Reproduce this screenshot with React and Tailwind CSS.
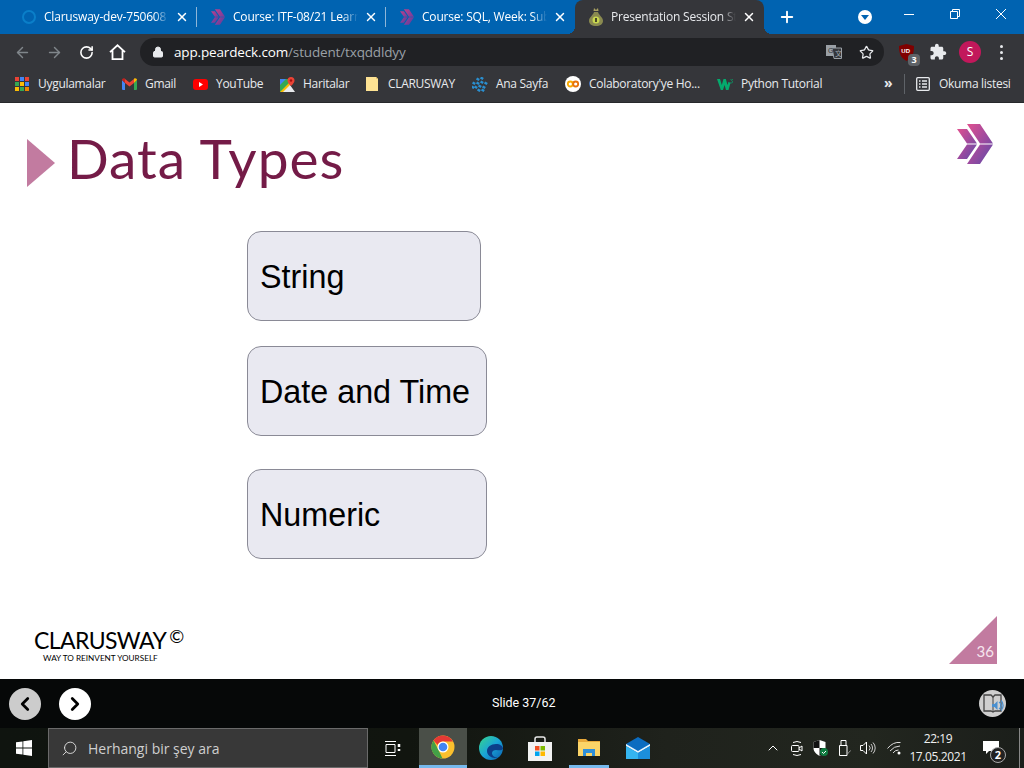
import { ArrowLeft, ArrowRight, RotateCw, Lock, Star, X, Plus, ChevronLeft, ChevronRight, ChevronUp, Search } from 'lucide-react';

const ui = "font-['Open_Sans','Noto_Sans',sans-serif]";

const ClaruswayMark = ({ width = 14, height = 16, id = 'cm', from = '#c0408a', mid = '#8a3f98', to = '#55409c' }) => (
  <svg width={width} height={height} viewBox="0 0 36 40">
    <defs>
      <linearGradient id={id} x1="0" y1="0" x2="1" y2="1">
        <stop offset="0" stopColor={from} />
        <stop offset="0.5" stopColor={mid} />
        <stop offset="1" stopColor={to} />
      </linearGradient>
    </defs>
    <path d="M0 5h10l10 14.500H10z M10 20.500h10L10 35H0z" fill={`url(#${id})`} />
    <path d="M10 0h13l13 19.500H23z M23 20.500h13L23 40H10z" fill={`url(#${id})`} />
  </svg>
);

const Tab = ({ icon, title, active, sep }) => (
  <div className={`relative flex items-center w-[189px] h-[34px] shrink-0 pl-[13px] pr-[8px] ${active ? 'bg-[#35363a] rounded-t-lg text-[#e8eaed]' : 'text-white'}`}>
    <div className="w-4 h-4 flex items-center justify-center shrink-0">{icon}</div>
    <span className="ml-[7px] w-[125px] overflow-hidden whitespace-nowrap text-xs tracking-[-0.2px] [mask-image:linear-gradient(90deg,#000_88%,transparent)]">{title}</span>
    <X size={14} strokeWidth={2.500} className="ml-auto text-white" />
    {sep && <div className="absolute right-0 top-[7px] h-5 w-px bg-[#8fb6d8]" />}
    {active && <div className="absolute -left-2 bottom-0 w-2 h-2 bg-[radial-gradient(circle_at_0_0,#0063b1_8px,#35363a_8px)]" />}
    {active && <div className="absolute -right-2 bottom-0 w-2 h-2 bg-[radial-gradient(circle_at_100%_0,#0063b1_8px,#35363a_8px)]" />}
  </div>
);

const Bookmark = ({ icon, label, width }) => (
  <div className={`flex items-center shrink-0 ${width}`}>
    <div className="w-4 h-4 flex items-center justify-center shrink-0">{icon}</div>
    <span className="ml-2 text-xs tracking-[-0.3px] text-[#e8eaed] whitespace-nowrap">{label}</span>
  </div>
);

const AppsIcon = () => (
  <svg width="14" height="14" viewBox="0 0 14 14">
    {['#ea4335', '#4285f4', '#ea4335', '#34a853', '#fbbc05', '#4285f4', '#fbbc05', '#34a853', '#ea8600'].map((c, i) => (
      <rect key={i} x={(i % 3) * 5} y={Math.floor(i / 3) * 5} width="4" height="4" fill={c} />
    ))}
  </svg>
);

const GmailIcon = () => (
  <svg width="15" height="12" viewBox="0 0 15 12">
    <path d="M0 2v9a1 1 0 0 0 1 1h2V5z" fill="#4285f4" />
    <path d="M15 2v9a1 1 0 0 1-1 1h-2V5z" fill="#34a853" />
    <path d="M3 5V1L7.500 4.500 12 1v4L7.500 8.500z" fill="#ea4335" />
    <path d="M0 2c0-1.500 1.800-2.300 3-1.300V5z" fill="#c5221f" />
    <path d="M15 2c0-1.500-1.800-2.300-3-1.300V5z" fill="#fbbc05" />
  </svg>
);

const YoutubeIcon = () => (
  <svg width="15" height="11" viewBox="0 0 15 11">
    <rect width="15" height="11" rx="3" fill="#f00" />
    <path d="M6 3l4 2.500L6 8z" fill="#fff" />
  </svg>
);

const MapsIcon = () => (
  <svg width="15" height="15" viewBox="0 0 15 15">
    <path d="M0 2h10v13H0z" fill="#34a853" />
    <path d="M0 15L10 5v10z" fill="#fbbc05" />
    <path d="M3 15l7-7 5 7z" fill="#e8eaed" />
    <path d="M0 2h6L0 8z" fill="#4285f4" />
    <path d="M11 0a3.500 3.500 0 0 0-3.500 3.500C7.500 6 11 9 11 9s3.500-3 3.500-5.500A3.500 3.500 0 0 0 11 0z" fill="#ea4335" />
    <circle cx="11" cy="3.500" r="1.200" fill="#a50e0e" />
  </svg>
);

const NoteIcon = () => (
  <svg width="12" height="14" viewBox="0 0 12 14">
    <path d="M0 0h10l2 2v12H0z" fill="#fde293" />
    <path d="M10 0l2 2h-2z" fill="#e8c66a" />
  </svg>
);

const AnaIcon = () => (
  <svg width="16" height="15" viewBox="0 0 16 15" fill="#2a8fd0">
    {[[2, 6], [6, 2], [10, 1], [6, 6], [10, 5], [14, 6], [4, 10], [8, 9], [12, 10], [7, 13], [11, 13], [1, 10]].map(([x, y], i) => (
      <rect key={i} x={x - 1.500} y={y - 1} width="3" height="2.500" transform={`rotate(30 ${x} ${y})`} />
    ))}
  </svg>
);

const ColabIcon = () => (
  <svg width="16" height="16" viewBox="0 0 16 16">
    <circle cx="8" cy="8" r="8" fill="#fff" />
    <circle cx="5.300" cy="8" r="2.500" fill="none" stroke="#f9ab00" strokeWidth="1.800" />
    <circle cx="10.700" cy="8" r="2.500" fill="none" stroke="#e8710a" strokeWidth="1.800" />
  </svg>
);

const W3Icon = () => (
  <svg width="16" height="11" viewBox="0 0 16 11">
    <path d="M0 0h3l1.800 6L6.500 0h2.300l1.700 6 1-3.200L13.500 4l-2 7H9L7.600 6 6 11H3.800z" fill="#04aa6d" />
    <path d="M13 0h2.500v.6l-1 1c.8.200 1.200.6 1.200 1.200 0 .7-.6 1.200-1.500 1.200-.4 0-.8-.1-1.100-.2" fill="none" stroke="#04aa6d" strokeWidth=".7" />
  </svg>
);

const ReadingIcon = () => (
  <svg width="14" height="14" viewBox="0 0 14 14" fill="none" stroke="#e8eaed" strokeWidth="1.300">
    <rect x=".7" y=".7" width="12.600" height="12.600" rx="1" />
    <path d="M3 4h1.500M6 4h5M3 7h1.500M6 7h5M3 10h1.500M6 10h5" />
  </svg>
);

const HomeIcon = () => (
  <svg width="17" height="16" viewBox="0 0 17 16" fill="none" stroke="#fff" strokeWidth="1.800">
    <path d="M1 8.200L8.500 1.300 16 8.200M3.500 6.500v8.600h10V6.500" />
  </svg>
);

const PuzzleIcon = () => (
  <svg width="18" height="18" viewBox="0 0 24 24" fill="#e8eaed">
    <path d="M20.500 11H19V7c0-1.100-.9-2-2-2h-4V3.500C13 2.120 11.880 1 10.500 1S8 2.120 8 3.500V5H4c-1.100 0-1.990.9-1.990 2v3.800H3.500c1.490 0 2.700 1.210 2.700 2.700s-1.210 2.700-2.700 2.700H2V20c0 1.100.9 2 2 2h3.800v-1.500c0-1.490 1.210-2.700 2.700-2.700 1.490 0 2.700 1.210 2.700 2.700V22H17c1.100 0 2-.9 2-2v-4h1.500c1.380 0 2.500-1.120 2.500-2.500S21.880 11 20.500 11z" />
  </svg>
);

const TranslateIcon = () => (
  <svg width="16" height="14" viewBox="0 0 16 14">
    <rect x="0" y="0" width="10" height="11" fill="#9aa0a6" />
    <path d="M6 3h9.500v10.500H8z" fill="#35363a" stroke="#9aa0a6" />
    <text x="2" y="8" fontSize="7" fontFamily="'Liberation Sans',sans-serif" fill="#35363a">G</text>
    <text x="9" y="11" fontSize="7" fontFamily="'Noto Sans CJK JP',sans-serif" fill="#9aa0a6">文</text>
  </svg>
);

const UblockIcon = () => (
  <svg width="15" height="17" viewBox="0 0 15 17">
    <path d="M7.500 0L15 2c0 8-2 12-7.500 15C2 14 0 10 0 2z" fill="#800000" />
    <text x="2.300" y="9" fontSize="6" fontWeight="700" fontFamily="'Liberation Sans',sans-serif" fill="#fff">UD</text>
  </svg>
);

const PearIcon = () => (
  <svg width="14" height="18" viewBox="0 0 14 18">
    <path d="M5 0l2 2 2-2 .5 3h-5z" fill="#a8a060" />
    <path d="M5 4h4c.5 3 5 5 5 9 0 3-3 5-7 5s-7-2-7-5c0-4 4.500-6 5-9z" fill="#8a8a50" />
    <circle cx="7" cy="12" r="3.500" fill="#c9d84f" />
    <rect x="6" y="10" width="2" height="4" fill="#4a4a2a" />
  </svg>
);

const WindowsLogo = () => (
  <svg width="16" height="16" viewBox="0 0 16 16" fill="#fff">
    <path d="M0 2.300l6.500-.9v6.200H0zM7.300 1.300L16 0v7.600H7.300zM0 8.400h6.500v6.200L0 13.700zM7.300 8.400H16V16l-8.700-1.300z" />
  </svg>
);

const TaskViewIcon = () => (
  <svg width="16" height="15" viewBox="0 0 16 15" fill="none" stroke="#fff">
    <path d="M0 .5h11M0 14.500h11M1 3.500h9v8H1z" />
    <path d="M14 3v3M14 8v2" strokeWidth="2.500" />
  </svg>
);

const ChromeIcon = () => (
  <svg width="24" height="24" viewBox="0 0 24 24">
    <circle cx="12" cy="12" r="11.500" fill="#fbc02d" />
    <path d="M12 .5A11.500 11.500 0 0 1 22 6.500H12A5.500 5.500 0 0 0 6.700 10L2.500 5.500A11.500 11.500 0 0 1 12 .5z" fill="#e53935" />
    <path d="M2.500 5.500L7.500 15l4 8.500A11.500 11.500 0 0 1 2.500 5.500z" fill="#43a047" />
    <circle cx="12" cy="12" r="5.500" fill="#fff" />
    <circle cx="12" cy="12" r="4.300" fill="#4285f4" />
  </svg>
);

const EdgeIcon = () => (
  <svg width="24" height="24" viewBox="0 0 24 24">
    <defs>
      <linearGradient id="edge" x1="0" y1="0" x2="1" y2="1">
        <stop offset="0" stopColor="#37d68a" />
        <stop offset="0.5" stopColor="#1aa5d8" />
        <stop offset="1" stopColor="#0a5fb0" />
      </linearGradient>
    </defs>
    <circle cx="12" cy="12" r="12" fill="url(#edge)" />
    <path d="M24 13c0-3-3-5-7-5-5 0-9 3-9 7 0 4 4 7 8 7 1 0 2 0 3-.5-4 0-6-2-6-4.500 0-2 2-3 4-3 3 0 5 1 7-1z" fill="#0c3f8a" />
  </svg>
);

const StoreIcon = () => (
  <svg width="24" height="25" viewBox="0 0 24 25">
    <path d="M7 7V3a2 2 0 0 1 2-2h6a2 2 0 0 1 2 2v4" fill="none" stroke="#e8e8e8" strokeWidth="1.500" />
    <path d="M0 6h24v19H0z" fill="#f2f2f2" />
    <rect x="7" y="10" width="4.500" height="4.500" fill="#f25022" />
    <rect x="12.500" y="10" width="4.500" height="4.500" fill="#7fba00" />
    <rect x="7" y="15.500" width="4.500" height="4.500" fill="#00a4ef" />
    <rect x="12.500" y="15.500" width="4.500" height="4.500" fill="#ffb900" />
  </svg>
);

const ExplorerIcon = () => (
  <svg width="22" height="18" viewBox="0 0 22 18">
    <path d="M0 1h8l2 2h12v15H0z" fill="#e8a93a" />
    <path d="M0 4h22v14H0z" fill="#fbd468" />
    <path d="M5 11h12v7h-3v-3H8v3H5z" fill="#2f8fd8" />
  </svg>
);

const MailIcon = () => (
  <svg width="24" height="22" viewBox="0 0 24 22">
    <path d="M12 0l12 7v15H0V7z" fill="#0b6cc0" />
    <path d="M0 7l12 7 12-7v2L12 16 0 9z" fill="#e8f4fc" />
    <path d="M0 9l12 7v6H0z" fill="#35b5f0" />
    <path d="M24 9l-12 7v6h12z" fill="#1c8fdc" />
  </svg>
);

const MeetIcon = () => (
  <svg width="12" height="17" viewBox="0 0 12 17" fill="none" stroke="#fff">
    <path d="M2 2.500Q6 .5 10 2.500M2 14.500Q6 16.500 10 14.500" />
    <rect x=".5" y="5.500" width="7.500" height="6" rx="1" />
    <path d="M8 8l3-2v5l-3-2" />
  </svg>
);

const ShieldIcon = () => (
  <svg width="15" height="16" viewBox="0 0 15 16">
    <path d="M6.500 0l6 2v6c0 4-3 6-6 8-3-2-6-4-6-8V2z" fill="#fff" />
    <path d="M6.500 0v8H.5V2zM6.500 8h6c0 3-3 6-6 8z" fill="#111" />
    <circle cx="11" cy="12" r="4" fill="#107c41" />
    <path d="M9 12l1.500 1.500L13 11" fill="none" stroke="#fff" />
  </svg>
);

const UsbIcon = () => (
  <svg width="12" height="16" viewBox="0 0 12 16" fill="none" stroke="#fff">
    <path d="M2 .5h5v5H2zM.5 5.500h7.500v10H.5z" />
    <path d="M8 14l2-1.500 1.500-2" stroke="#999" />
  </svg>
);

const SpeakerIcon = () => (
  <svg width="16" height="14" viewBox="0 0 16 14" fill="none" stroke="#fff">
    <path d="M.5 4.500h2.500L6.500 1v12L3 9.500H.5z" />
    <path d="M9 4.500a3.500 3.500 0 0 1 0 5M11 3a6 6 0 0 1 0 8M13 1.500a8 8 0 0 1 0 11" stroke="#ccc" />
  </svg>
);

const WifiIcon = () => (
  <svg width="14" height="14" viewBox="0 0 14 14" fill="none" stroke="#ddd">
    <path d="M.5 7.500Q6 .5 13.500 1.500M3 10Q7 5 13 5M6 12q2-3 5.500-3" />
    <circle cx="12" cy="12" r="1.500" fill="#fff" stroke="none" />
  </svg>
);

const AudioBookIcon = () => (
  <svg width="24" height="22" viewBox="0 0 24 22">
    <path d="M3 2h7l2 2 2-2h6v16h-6l-2 1-2-1H3z" fill="none" stroke="#444" strokeWidth="1.300" />
    <path d="M12 4v15" stroke="#444" />
    <path d="M11 11h2.500l3-3v9l-3-3H11z" fill="#4a90d0" />
    <path d="M18 9a4 4 0 0 1 0 7M20 7.500a7 7 0 0 1 0 10" fill="none" stroke="#4a90d0" strokeWidth="1.300" />
  </svg>
);

const Box = ({ label, width, className = '' }) => (
  <div className={`${width} h-[90px] flex items-center pl-[12px] pt-[2px] bg-[#e9e9f1] border border-[#8a8a96] rounded-[14px] text-[32.300px] text-black font-['Liberation_Sans',sans-serif] ${className}`}>
    {label}
  </div>
);

export default function App() {
  return (
    <div className={`w-[1024px] h-[768px] flex flex-col overflow-hidden bg-white ${ui}`}>
      {/* tab strip */}
      <div className="h-[34px] bg-[#0063b1] flex items-center pl-2 shrink-0">
        <Tab title="Clarusway-dev-750608" sep icon={<div className="w-[14px] h-[14px] rounded-full border-2 border-[#0a7fc9]" />} />
        <Tab title="Course: ITF-08/21 Learn" sep icon={<ClaruswayMark id="tab1" />} />
        <Tab title="Course: SQL, Week: Sub" icon={<ClaruswayMark id="tab2" />} />
        <Tab title="Presentation Session Stu" active icon={<PearIcon />} />
        <Plus size={18} strokeWidth={2.500} className="text-white ml-[14px] shrink-0" />
        <div className="ml-[62px] w-[14px] h-[14px] rounded-full bg-white flex items-center justify-center shrink-0">
          <div className="w-0 h-0 border-x-[4px] border-x-transparent border-t-[5px] border-t-[#0063b1]" />
        </div>
        <svg width="10" height="10" viewBox="0 0 10 10" stroke="#fff" className="ml-[32px] -mt-[6px] shrink-0">
          <path d="M0 5.500h10" />
        </svg>
        <svg width="10" height="10" viewBox="0 0 10 10" fill="none" stroke="#fff" className="ml-[36px] -mt-[6px] shrink-0">
          <path d="M.5 2.500h7v7h-7zM2.500 2.500v-2h7v7h-2" />
        </svg>
        <svg width="10" height="10" viewBox="0 0 10 10" stroke="#fff" className="ml-[36px] -mt-[6px] shrink-0">
          <path d="M0 0l10 10M10 0L0 10" />
        </svg>
      </div>

      {/* toolbar */}
      <div className="h-[32px] bg-[#35363a] flex items-end shrink-0">
        <div className="h-7 w-[140px] flex items-center pl-[14px] shrink-0">
          <ArrowLeft size={17} className="text-[#80868b]" />
          <ArrowRight size={17} className="text-[#80868b] ml-[15px]" />
          <RotateCw size={15} strokeWidth={2.500} className="text-white ml-[16px]" />
          <div className="ml-[15px]"><HomeIcon /></div>
        </div>
        <div className="h-7 w-[744px] rounded-full bg-[#202124] flex items-center pl-[12px] pr-[10px] shrink-0">
          <Lock size={12} fill="#e8eaed" className="text-[#e8eaed]" />
          <span className="ml-[10px] text-[13.500px] tracking-[-0.15px] text-white">app.peardeck.com<span className="text-[#9aa0a6]">/student/txqddldyy</span></span>
          <div className="ml-auto flex items-center gap-[17px]">
            <TranslateIcon />
            <Star size={15} className="text-[#e8eaed]" />
          </div>
        </div>
        <div className="h-7 flex-1 flex items-center pl-[15px]">
          <div className="relative w-[15px] h-[17px]">
            <UblockIcon />
            <span className="absolute left-[9px] top-[10px] w-3 h-3 rounded-sm bg-[#5f6368] text-[9px] font-bold leading-3 text-center text-white">3</span>
          </div>
          <div className="ml-[15px]"><PuzzleIcon /></div>
          <div className="ml-[12px] w-[22px] h-[22px] rounded-full bg-[#c2185b] text-white text-xs flex items-center justify-center">S</div>
          <div className="ml-[19px] flex flex-col gap-[3px]">
            <div className="w-[3px] h-[3px] rounded-full bg-[#e8eaed]" />
            <div className="w-[3px] h-[3px] rounded-full bg-[#e8eaed]" />
            <div className="w-[3px] h-[3px] rounded-full bg-[#e8eaed]" />
          </div>
        </div>
      </div>

      {/* bookmarks */}
      <div className="h-[37px] bg-[#35363a] border-b border-[#27282b] flex items-center pl-[14px] shrink-0">
        <Bookmark width="w-[107px]" icon={<AppsIcon />} label="Uygulamalar" />
        <Bookmark width="w-[71px]" icon={<GmailIcon />} label="Gmail" />
        <Bookmark width="w-[87px]" icon={<YoutubeIcon />} label="YouTube" />
        <Bookmark width="w-[85px]" icon={<MapsIcon />} label="Haritalar" />
        <Bookmark width="w-[108px]" icon={<NoteIcon />} label="CLARUSWAY" />
        <Bookmark width="w-[93px]" icon={<AnaIcon />} label="Ana Sayfa" />
        <Bookmark width="w-[152px]" icon={<ColabIcon />} label="Colaboratory'ye Ho..." />
        <Bookmark width="w-[167px]" icon={<W3Icon />} label="Python Tutorial" />
        <span className="text-[14px] leading-4 -mt-[3px] text-[#e8eaed] font-bold w-[20px] shrink-0">»</span>
        <div className="h-5 w-px bg-[#5f6368] mr-[10px] shrink-0" />
        <Bookmark width="w-[94px]" icon={<ReadingIcon />} label="Okuma listesi" />
      </div>

      {/* slide */}
      <div className="h-[576px] shrink-0 flex flex-col bg-white">
        <div className="flex items-start pt-[36px] pl-[27px] pr-[31px]">
          <div className="w-0 h-0 border-y-[24px] border-y-transparent border-l-[28px] border-l-[#c27ba0]" />
          <h1 className="ml-[12px] -mt-[13px] text-[55px] leading-[64px] tracking-[1px] font-['Lato',sans-serif] text-[#741b47]">Data Types</h1>
          <div className="ml-auto -mt-[15px]">
            <ClaruswayMark width={36} height={40} id="slideMark" from="#e0508f" mid="#a04a9e" to="#5a4aa8" />
          </div>
        </div>
        <div className="flex flex-col pl-[247px] mt-[41px]">
          <Box label="String" width="w-[234px]" />
          <Box label="Date and Time" width="w-[240px]" className="mt-[25px]" />
          <Box label="Numeric" width="w-[240px]" className="mt-[33px]" />
        </div>
        <div className="flex items-end justify-between pl-[34px] pr-[27px] mt-auto pb-[15px]">
          <div className="flex flex-col font-['Lato',sans-serif] text-black">
            <div className="flex items-start">
              <span className="text-[23px] leading-[26px] tracking-[-0.6px]">CLARUSWAY</span>
              <span className="text-[18px] leading-[18px] ml-[3px]">©</span>
            </div>
            <span className="text-[8.200px] leading-[10px] ml-[9px] mb-[1px] whitespace-nowrap">WAY TO REINVENT YOURSELF</span>
          </div>
          <div className="relative w-12 h-12">
            <svg width="48" height="48" viewBox="0 0 48 48"><path d="M48 0v48H0z" fill="#c27ba0" /></svg>
            <span className="absolute right-[3px] bottom-[5px] text-[15px] leading-[16px] text-[#f6e6ee] font-['Lato',sans-serif]">36</span>
          </div>
        </div>
      </div>

      {/* slide controls */}
      <div className="h-[49px] bg-[#060808] shrink-0 flex items-center pl-[9px] pr-[18px]">
        <div className="w-8 h-8 rounded-full bg-[#cccccc] flex items-center justify-center">
          <ChevronLeft size={22} strokeWidth={3} className="text-black" />
        </div>
        <div className="ml-[18px] w-8 h-8 rounded-full bg-white flex items-center justify-center">
          <ChevronRight size={22} strokeWidth={3} className="text-black" />
        </div>
        <span className="ml-[401px] text-[12.500px] text-white font-['Roboto',sans-serif]">Slide 37/62</span>
        <div className="ml-auto w-[27px] h-[27px] rounded-full bg-[#cfcfcf] flex items-center justify-center">
          <AudioBookIcon />
        </div>
      </div>

      {/* windows taskbar */}
      <div className="flex-1 bg-[linear-gradient(90deg,#0f140f,#11150f_40%,#1f221c_65%,#22261f_85%,#1b1e1a)] flex items-stretch text-white">
        <div className="w-12 shrink-0 flex items-center justify-center"><WindowsLogo /></div>
        <div className="w-[320px] shrink-0 bg-[#383838] border border-[#6a6a6a] flex items-center pl-[12px]">
          <Search size={17} strokeWidth={1.300} className="text-[#e0e0e0] -scale-x-100" />
          <span className="ml-[10px] text-[14px] text-[#cfcfcf]">Herhangi bir şey ara</span>
        </div>
        <div className="w-[51px] shrink-0 pr-[2px] flex items-center justify-center"><TaskViewIcon /></div>
        <div className="w-[48px] shrink-0 bg-[#4a4f48] border-b-[3px] border-[#76b9ed] flex items-center justify-center"><ChromeIcon /></div>
        <div className="w-[48px] shrink-0 flex items-center justify-center"><EdgeIcon /></div>
        <div className="w-[50px] shrink-0 flex items-center justify-center"><StoreIcon /></div>
        <div className="w-[40px] mx-[4px] shrink-0 border-b-[3px] border-[#76b9ed] flex items-center justify-center"><ExplorerIcon /></div>
        <div className="w-[50px] shrink-0 flex items-center justify-center"><MailIcon /></div>
        <div className="flex items-center ml-[102px] shrink-0">
          <ChevronUp size={16} strokeWidth={1.500} className="text-white" />
          <div className="ml-[10px]"><MeetIcon /></div>
          <div className="ml-[10px]"><ShieldIcon /></div>
          <div className="ml-[11px]"><UsbIcon /></div>
          <div className="ml-[9px]"><SpeakerIcon /></div>
          <div className="ml-[11px]"><WifiIcon /></div>
        </div>
        <div className="ml-[9px] w-[56px] shrink-0 flex flex-col items-center justify-center text-xs tracking-[-0.4px] leading-[18px] text-[#f0f0f0]">
          <span>22:19</span>
          <span>17.05.2021</span>
        </div>
        <div className="relative ml-[17px] w-6 shrink-0 flex items-center">
          <svg width="16" height="14" viewBox="0 0 16 14" fill="#fff"><path d="M0 0h16v10H6l-3 3v-3H0z" /></svg>
          <span className="absolute left-[7px] top-[19px] w-4 h-4 rounded-full border border-[#aaa] bg-[#222] text-[11px] font-bold leading-[14px] text-center">2</span>
        </div>
        <div className="ml-auto mr-[4px] w-px bg-[#888]" />
      </div>
    </div>
  );
}
